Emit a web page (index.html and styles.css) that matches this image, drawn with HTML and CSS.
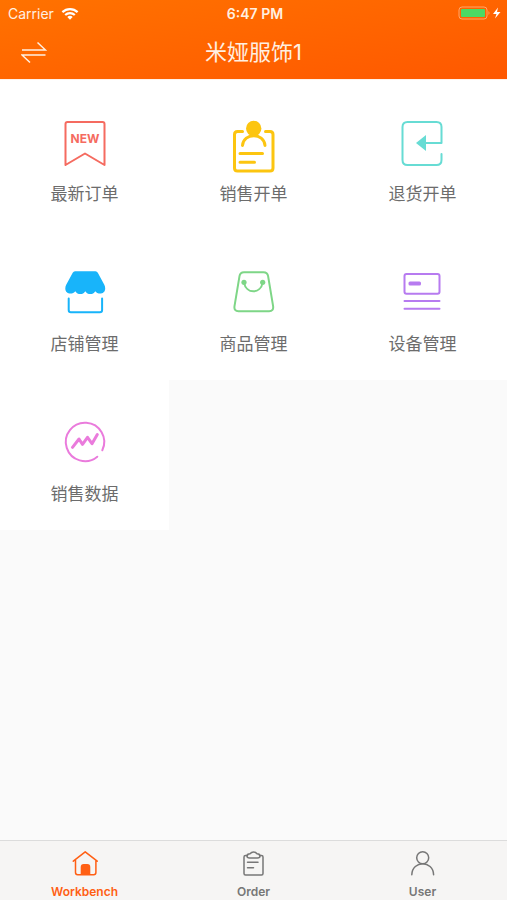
FILE: index.html
```html
<!DOCTYPE html>
<html lang="zh-CN">
<head>
<meta charset="utf-8">
<meta name="viewport" content="width=device-width, initial-scale=1">
<title>米娅服饰1</title>
<link rel="stylesheet" href="styles.css">
</head>
<body>
<header class="header">
  <div class="status">
    <div class="status-left">
      <span>Carrier</span>
      <svg class="wifi" width="18" height="14" viewBox="0 0 18 14" aria-hidden="true">
        <path d="M1.400 5.100a11 11 0 0 1 15.200 0M4.200 8a7 7 0 0 1 9.600 0" fill="none" stroke="currentColor" stroke-width="2.200"/>
        <path d="M6.300 10a4 4 0 0 1 5.400 0L9 12.800z" fill="currentColor"/>
      </svg>
    </div>
    <span class="clock">6:47 PM</span>
    <div class="status-right">
      <svg width="44" height="16" viewBox="0 0 44 16" aria-hidden="true">
        <rect x="1" y="1" width="28" height="12" rx="3" fill="none" stroke="#ffa76b"/>
        <rect x="3" y="3" width="24" height="8" rx="1" fill="#4cd964"/>
        <path d="M30.500 5q2 2 0 4z" fill="#ffa76b"/>
        <path d="M40 1.500l-5 6.500h3.500L37 12.500l5.500-6.500H39z" fill="#fff"/>
      </svg>
    </div>
  </div>
  <div class="titlebar">
    <button class="switch" type="button" aria-label="切换店铺">
      <svg width="26" height="24" viewBox="0 0 26 24" aria-hidden="true">
        <path d="M1 10h23.500L16.500 2.500M24.500 15H1l8 7.500"/>
      </svg>
    </button>
    <h1 class="title">米娅服饰1</h1>
  </div>
</header>

<main class="content">
  <nav class="grid" aria-label="功能">
    <a class="tile red" href="#new">
      <svg class="icon" viewBox="0 0 48 48" aria-hidden="true">
        <path d="M4.500 45V4q0-2 2-2H41.500q2 0 2 2v41L24 33.500z"/>
        <text class="new" x="24" y="23" text-anchor="middle">NEW</text>
      </svg>
      <span>最新订单</span>
    </a>
    <a class="tile yellow" href="#sell">
      <svg class="icon" viewBox="0 0 48 48" aria-hidden="true">
        <path d="M12.500 11.500H7.500q-3 0-3 3V48q0 3 3 3H40q3 0 3-3V14.500q0-3-3-3H35.500"/>
        <circle class="solid" cx="23.700" cy="8.500" r="7.700"/>
        <path d="M12.500 25.500c1-13 21.500-13 22.500 0M10 33.500H32.500M10 42.300H24.500"/>
      </svg>
      <span>销售开单</span>
    </a>
    <a class="tile teal" href="#return">
      <svg class="icon" viewBox="0 0 48 48" aria-hidden="true">
        <path d="M42.500 34v6q0 5-5 5h-29q-5 0-5-5V7q0-5 5-5h29q5 0 5 5v16H26"/>
        <path class="solid" d="M17 23l10-8v16z"/>
      </svg>
      <span>退货开单</span>
    </a>
    <a class="tile blue" href="#shop">
      <svg class="icon" viewBox="0 0 48 48" aria-hidden="true">
        <path class="solid" d="M14 1.300h20.500q1.500 0 2.300 1.500l6.500 12q.9 1.700.9 3.700c0 6-7.500 6.500-9.900 2.700-2.200 3.800-7.800 3.800-10 0-2.200 3.800-7.800 3.800-10 0-2.500 3.800-10 3.300-10-2.700q0-2 .9-3.700l6.500-12q.8-1.500 2.300-1.500z"/>
        <path d="M7.700 28.500V40q0 2.200 2.200 2.200h29q2.200 0 2.200-2.200V28.500"/>
      </svg>
      <span>店铺管理</span>
    </a>
    <a class="tile green" href="#goods">
      <svg class="icon" viewBox="0 0 48 48" aria-hidden="true">
        <path d="M14 2.200H33.500q4 0 4.600 4l5 30q.7 5-4 5H8.500q-4.700 0-4-5l5-30q.6-4 4.500-4z"/>
        <circle class="solid" cx="14" cy="12.300" r="2.600"/>
        <circle class="solid" cx="32.700" cy="12.300" r="2.600"/>
        <path d="M14 12.300c2 12 16.700 12 18.700 0"/>
      </svg>
      <span>商品管理</span>
    </a>
    <a class="tile purple" href="#device">
      <svg class="icon" viewBox="0 0 48 48" aria-hidden="true">
        <rect x="5.500" y="4" width="35" height="19.700" rx="2"/>
        <rect class="solid" x="9.500" y="11.500" width="12.500" height="4" rx="1.500"/>
        <path d="M5.500 31h35M5.500 38.700h35"/>
      </svg>
      <span>设备管理</span>
    </a>
    <a class="tile pink" href="#data">
      <svg class="icon" viewBox="0 0 48 48" aria-hidden="true">
        <path d="M36.300 36.700A19.200 19.200 0 1 1 41.300 30.300"/>
        <path class="bold" d="M11.500 27.300L18 19l3.500 5.300 5-7 4.500 6.400 5.300-9.200"/>
      </svg>
      <span>销售数据</span>
    </a>
  </nav>
</main>

<nav class="tabs" aria-label="主导航">
  <a class="tab active" href="#workbench" aria-current="page">
    <svg class="tab-icon" viewBox="0 0 28 28" aria-hidden="true">
      <path d="M2.300 11.200L14.200 1.800l12 9.400M4.500 10v12.500q0 2.200 2.200 2.200h16q2.200 0 2.200-2.200V10"/>
      <path class="solid" d="M9.700 24.700V17q0-3 3-3h3.600q3 0 3 3v7.700z"/>
    </svg>
    <span>Workbench</span>
  </a>
  <a class="tab" href="#order">
    <svg class="tab-icon" viewBox="0 0 28 28" aria-hidden="true">
      <path d="M7.500 5.500H5.500Q4 5.500 4 7v16.500Q4 25 5.500 25h16q1.500 0 1.500-1.500V7q0-1.500-1.500-1.500h-2M7.500 12.300H18M7.500 17.700h6"/>
      <path d="M9.500 8Q7 8 7 6t3-2.200Q11.500 2 13.500 2t3.500 1.800q3 .2 3 2.200t-2.500 2z"/>
    </svg>
    <span>Order</span>
  </a>
  <a class="tab" href="#user">
    <svg class="tab-icon" viewBox="0 0 28 28" aria-hidden="true">
      <circle cx="13.700" cy="7.700" r="6"/>
      <path d="M2.800 24.700c.5-14.500 21.300-14.500 21.800 0"/>
    </svg>
    <span>User</span>
  </a>
</nav>
</body>
</html>
```
FILE: styles.css
```css
* {
  box-sizing: border-box;
}

body {
  display: flex;
  flex-direction: column;
  min-height: 100vh;
  margin: 0;
  background: #fafafa;
  color: #6c6c6c;
  font-family: Inter, "Noto Sans CJK SC", sans-serif;
}

a {
  color: inherit;
  text-decoration: none;
}

svg {
  display: block;
}

.header {
  border-bottom: 1px solid #fff1e8;
  background: linear-gradient(170deg, #ff7200, #ff5800) padding-box;
  color: #fff0e2;
}

.status {
  display: grid;
  grid-template-columns: 1fr auto 1fr;
  align-items: center;
  height: 27px;
  padding: 0 5px 0 8px;
  font-size: 14px;
}

.status-left {
  display: flex;
  align-items: center;
  gap: 7px;
}

.wifi {
  color: #fff;
}

.clock {
  font-weight: 600;
}

.status-right {
  display: flex;
  justify-content: flex-end;
}

.titlebar {
  display: grid;
  grid-template-columns: 1fr auto 1fr;
  align-items: center;
  height: 52px;
  padding: 0 21px 2px;
}

.switch {
  justify-self: start;
  padding: 0;
  border: 0;
  background: none;
  color: inherit;
}

.switch svg {
  fill: none;
  stroke: currentColor;
  stroke-width: 1.5;
}

.title {
  margin: 0;
  font-size: 22px;
  font-weight: 400;
  line-height: 32px;
}

.content {
  flex: 1;
}

.grid {
  display: grid;
  grid-template-columns: repeat(3, 1fr);
}

.tile {
  display: flex;
  flex-direction: column;
  align-items: center;
  gap: 14px;
  padding: 40px 0 24px;
  background: #fff;
  font-size: 17px;
  line-height: 24px;
}

.icon {
  width: 48px;
  height: 48px;
  overflow: visible;
  fill: none;
  stroke: currentColor;
  stroke-width: 2;
  stroke-linecap: round;
  stroke-linejoin: round;
}

.tile span,
.tab span {
  white-space: nowrap;
}

.tile span {
  color: #6c6c6c;
}

.solid {
  fill: currentColor;
  stroke: none;
}

.bold {
  stroke-width: 3;
}

.new {
  fill: currentColor;
  stroke: none;
  font: 700 12px Inter, sans-serif;
}

.red { color: #f56b60; }
.yellow { color: #fcc510; }
.teal { color: #67dcd4; }
.blue { color: #18b4fa; }
.green { color: #7ed687; }
.purple { color: #b77bf0; }
.pink { color: #ea7bdc; }

.yellow .icon {
  stroke-width: 3;
}

.tabs {
  display: grid;
  grid-template-columns: repeat(3, 1fr);
  border-top: 1px solid #dcdcdc;
  background: #f6f5f4;
}

.tab {
  display: flex;
  flex-direction: column;
  align-items: center;
  gap: 6px;
  padding: 9px 0 0;
  color: #777;
  font-size: 12px;
  font-weight: 600;
  line-height: 16px;
}

.active {
  color: #ff5f14;
}

.tab-icon {
  width: 28px;
  height: 28px;
  fill: none;
  stroke: currentColor;
  stroke-width: 1.5;
  stroke-linecap: round;
  stroke-linejoin: round;
}
```
